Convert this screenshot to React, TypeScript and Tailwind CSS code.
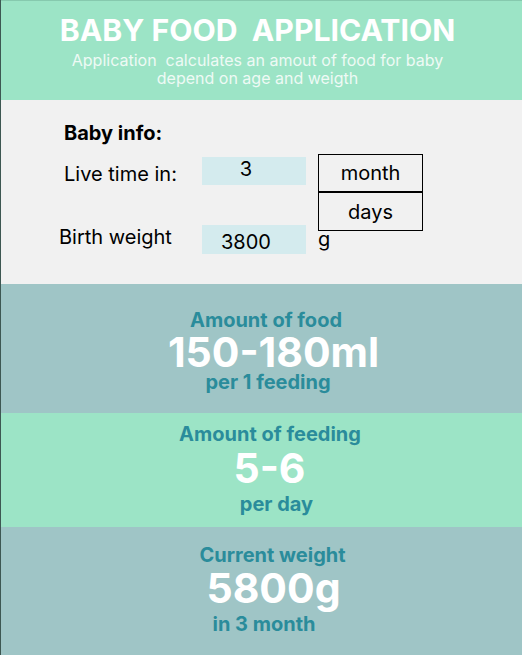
import React from "react";

const font = { fontFamily: "Inter, 'Noto Sans', sans-serif" };

function Result({
  title,
  value,
  sub,
  cls,
  pt,
  tpl,
  vpl,
  spl,
  vmt,
  smt,
}: {
  title: string;
  value: string;
  sub: string;
  cls: string;
  pt: string;
  tpl: string;
  vpl: string;
  spl: string;
  vmt: string;
  smt: string;
}) {
  return (
    <div className={`flex flex-col items-stretch text-center ${cls} ${pt}`}>
      <div className={`text-[20px] leading-[24px] font-bold text-[#2a8c9b] ${tpl}`}>{title}</div>
      <div className={`text-[41px] leading-[41px] font-bold text-white ${vpl} ${vmt}`}>{value}</div>
      <div className={`text-[20px] leading-[24px] font-bold text-[#2a8c9b] ${spl} ${smt}`}>{sub}</div>
    </div>
  );
}

export default function App() {
  return (
    <div className="w-[522px] h-[655px] overflow-hidden border-l border-[#3d5752] flex flex-col" style={font}>
      <div className="h-[100px] bg-[#9ce4c6] border-t border-[#86c9ae] flex flex-col items-center pr-[8px] text-center">
        <div className="text-[30.2px] leading-[36px] font-bold text-white mt-[11px] whitespace-pre">
          BABY FOOD  APPLICATION
        </div>
        <div className="text-[16px] leading-[18px] text-[#eefaf5] mt-[3px] font-normal">
          Application&nbsp; calculates an amout of food for baby
          <br />
          depend on age and weigth
        </div>
      </div>

      <div className="h-[184px] bg-[#f1f1f1] pl-[63px] pt-[21px] text-black">
        <div className="text-[20px] leading-[24px] font-bold">Baby info:</div>
        <div className="flex items-start mt-[9px]">
          <div className="flex flex-col w-[254px]">
            <div className="flex items-start">
              <div className="w-[138px] text-[20px] leading-[24px] mt-[8px]">Live time in:</div>
              <div className="w-[104px] h-[28px] mt-[3px] bg-[#d4ebee] text-center pr-[16px] text-[20px] leading-[24px]">3</div>
            </div>
            <div className="flex items-start mt-[39px] -ml-[5px]">
              <div className="w-[143px] text-[20px] leading-[24px]">Birth weight</div>
              <div className="w-[104px] h-[29px] bg-[#d4ebee] text-center pr-[16px] text-[20px] leading-[24px] pt-[5px]">3800</div>
            </div>
          </div>
          <div className="flex flex-col">
            <div className="w-[105px] h-[38px] border border-black flex items-center justify-center text-[20px]">month</div>
            <div className="w-[105px] h-[39px] border border-black flex items-center justify-center text-[20px]">days</div>
            <div className="text-[20px] leading-[20px] -mt-[2px]">g</div>
          </div>
        </div>
      </div>

      <Result
        title="Amount of food"
        value="150-180ml"
        sub="per 1 feeding"
        cls="h-[129px] bg-[#9fc5c6]"
        pt="pt-[24px]"
        tpl="pl-[9px]"
        vpl="pl-[24px]"
        spl="pl-[13px]"
        vmt="mt-[0px]"
        smt="-mt-[3px]"
      />
      <Result
        title="Amount of feeding"
        value="5-6"
        sub="per day"
        cls="h-[114px] bg-[#9ce4c6]"
        pt="pt-[9px]"
        tpl="pl-[17px]"
        vpl="pl-[16px]"
        spl="pl-[30px]"
        vmt="mt-[2px]"
        smt="mt-[3px]"
      />
      <Result
        title="Current weight"
        value="5800g"
        sub="in 3 month"
        cls="flex-1 bg-[#9fc5c6]"
        pt="pt-[16px]"
        tpl="pl-[22px]"
        vpl="pl-[24px]"
        spl="pl-[5px]"
        vmt="mt-[1px]"
        smt="mt-[3px]"
      />
    </div>
  );
}
